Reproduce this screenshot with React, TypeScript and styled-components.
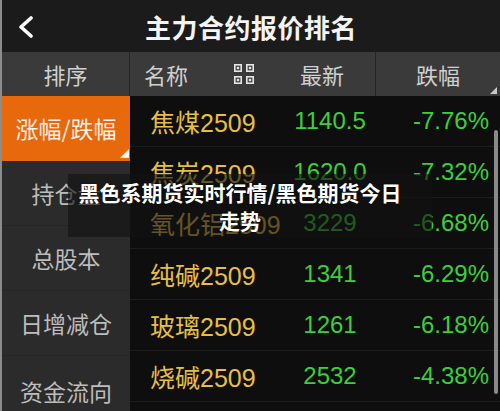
import React from 'react';
import styled, { createGlobalStyle } from 'styled-components';

const GlobalStyle = createGlobalStyle`
  html, body {
    margin: 0;
    padding: 0;
    background: #111;
  }
  * {
    box-sizing: border-box;
  }
`;

const Screen = styled.div`
  position: relative;
  width: 500px;
  height: 411px;
  overflow: hidden;
  display: flex;
  flex-direction: column;
  background: #0e0e0e;
  border-left: 2px solid #8c8c8c;
  font-family: 'Liberation Sans', 'Noto Sans CJK SC', sans-serif;
`;

const Header = styled.header`
  height: 52px;
  flex: none;
  display: grid;
  grid-template-columns: 50px 1fr 50px;
  align-items: center;
  background: #1b1b1b;
`;

const BackButton = styled.div`
  display: flex;
  align-items: center;
  justify-content: center;
  padding-top: 2px;
`;

const Title = styled.h1`
  margin: 0;
  text-align: center;
  color: #f4f4f4;
  font-family: 'Noto Sans CJK SC', sans-serif;
  font-size: 26px;
  font-weight: 700;
  letter-spacing: 0.5px;
  line-height: 1;
  padding-top: 2px;
`;

const ColumnBar = styled.div`
  height: 44px;
  flex: none;
  display: grid;
  grid-template-columns: 128px 246px 1fr;
  background: #3a3a3a;
  color: #d0d0d0;
  font-family: 'Noto Sans CJK SC', sans-serif;
  font-size: 22px;
`;

const HeadCell = styled.div<{ $corner?: boolean; $align?: 'center' | 'start' }>`
  position: relative;
  display: flex;
  align-items: center;
  justify-content: ${p => (p.$align === 'start' ? 'flex-start' : 'center')};
  gap: 45px;
  padding-left: ${p => (p.$align === 'start' ? '14px' : '0')};
  border-right: 1px solid #262626;

  &:last-child {
    border-right: none;
  }

  &::after {
    content: '';
    display: ${p => (p.$corner ? 'block' : 'none')};
    position: absolute;
    right: 3px;
    bottom: 2px;
    border-style: solid;
    border-width: 0 0 7px 7px;
    border-color: transparent transparent #c8c8c8 transparent;
  }
`;

const Body = styled.div`
  flex: 1;
  display: flex;
  min-height: 0;
`;

const Sidebar = styled.nav`
  width: 128px;
  flex: none;
  display: flex;
  flex-direction: column;
  background: #2b2b2b;
`;

const SideItem = styled.div<{ $active?: boolean }>`
  position: relative;
  height: 65px;
  flex: none;
  display: flex;
  align-items: center;
  justify-content: center;
  font-family: 'Noto Sans CJK SC', sans-serif;
  font-size: 23px;
  color: ${p => (p.$active ? '#fcefe6' : '#bdbdbd')};
  background: ${p => (p.$active ? '#e8680c' : 'transparent')};
  border-bottom: 1px solid ${p => (p.$active ? '#e8680c' : '#262626')};

  &:last-child {
    padding-top: 6px;
  }

  &::after {
    content: '';
    display: ${p => (p.$active ? 'block' : 'none')};
    position: absolute;
    right: 1px;
    bottom: 2px;
    border-style: solid;
    border-width: 0 0 9px 9px;
    border-color: transparent transparent #fff4ea transparent;
  }
`;

const Table = styled.div`
  position: relative;
  flex: 1;
  display: flex;
  flex-direction: column;
  background: #0e0e0e;
`;

const Row = styled.div`
  height: 51px;
  flex: none;
  display: grid;
  grid-template-columns: 140px 120px 1fr;
  align-items: center;
  border-bottom: 1px solid #1c1c1c;
`;

const Name = styled.span`
  padding-left: 20px;
  color: #e6bf45;
  font-size: 25px;
  white-space: nowrap;
`;

const Price = styled.span`
  text-align: center;
  color: #3ccf3c;
  font-size: 24px;
`;

const Change = styled.span`
  text-align: right;
  padding-right: 11px;
  color: #3ccf3c;
  font-size: 24px;
`;

const Scrollbar = styled.div`
  position: absolute;
  right: 2px;
  top: 34px;
  width: 4px;
  height: 264px;
  border-radius: 2px;
  background: #8a8a8a;
`;

const Overlay = styled.div`
  position: absolute;
  left: 66px;
  top: 174px;
  width: 364px;
  height: 63px;
  padding: 4px 28px 0 8px;
  background: rgba(18, 18, 18, 0.62);
  color: #ffffff;
  font-family: 'Noto Sans CJK SC', sans-serif;
  font-size: 21px;
  font-weight: 700;
  line-height: 28px;
  text-align: center;
  text-shadow: 0 0 2px rgba(0, 0, 0, 0.8);
`;

const BackIcon = () => (
  <svg width="22" height="22" viewBox="0 0 22 22">
    <path d="M15 2 L5 11 L15 20" fill="none" stroke="#fff" strokeWidth="3.6" strokeLinecap="round" strokeLinejoin="round" />
  </svg>
);

const GridIcon = () => (
  <svg width="22" height="22" viewBox="0 0 22 22">
    {[
      [1, 1],
      [13, 1],
      [1, 13],
      [13, 13],
    ].map(([x, y], i) => (
      <g key={i}>
        <rect x={x + 0.8} y={y + 0.8} width="6.4" height="6.4" fill="none" stroke="#e6e6e6" strokeWidth="1.6" />
        <rect x={x + 2.8} y={y + 2.8} width="2.4" height="2.4" fill="#e6e6e6" />
      </g>
    ))}
  </svg>
);

const sideItems = ['涨幅/跌幅', '持仓量', '总股本', '日增减仓', '资金流向'];

const rows = [
  { name: '焦煤2509', price: '1140.5', change: '-7.76%' },
  { name: '焦炭2509', price: '1620.0', change: '-7.32%' },
  { name: '氧化铝2509', price: '3229', change: '-6.68%' },
  { name: '纯碱2509', price: '1341', change: '-6.29%' },
  { name: '玻璃2509', price: '1261', change: '-6.18%' },
  { name: '烧碱2509', price: '2532', change: '-4.38%' },
];

const App: React.FC = () => {
  return (
    <>
      <GlobalStyle />
      <Screen>
        <Header>
          <BackButton>
            <BackIcon />
          </BackButton>
          <Title>主力合约报价排名</Title>
          <div />
        </Header>
        <ColumnBar>
          <HeadCell>排序</HeadCell>
          <HeadCell $align="start">
            <span>名称</span>
            <GridIcon />
            <span>最新</span>
          </HeadCell>
          <HeadCell $corner>跌幅</HeadCell>
        </ColumnBar>
        <Body>
          <Sidebar>
            {sideItems.map((item, index) => (
              <SideItem key={item} $active={index === 0}>
                {item}
              </SideItem>
            ))}
          </Sidebar>
          <Table>
            {rows.map(row => (
              <Row key={row.name}>
                <Name>{row.name}</Name>
                <Price>{row.price}</Price>
                <Change>{row.change}</Change>
              </Row>
            ))}
            <Scrollbar />
          </Table>
        </Body>
        <Overlay>黑色系期货实时行情/黑色期货今日走势</Overlay>
      </Screen>
    </>
  );
};

export default App;
